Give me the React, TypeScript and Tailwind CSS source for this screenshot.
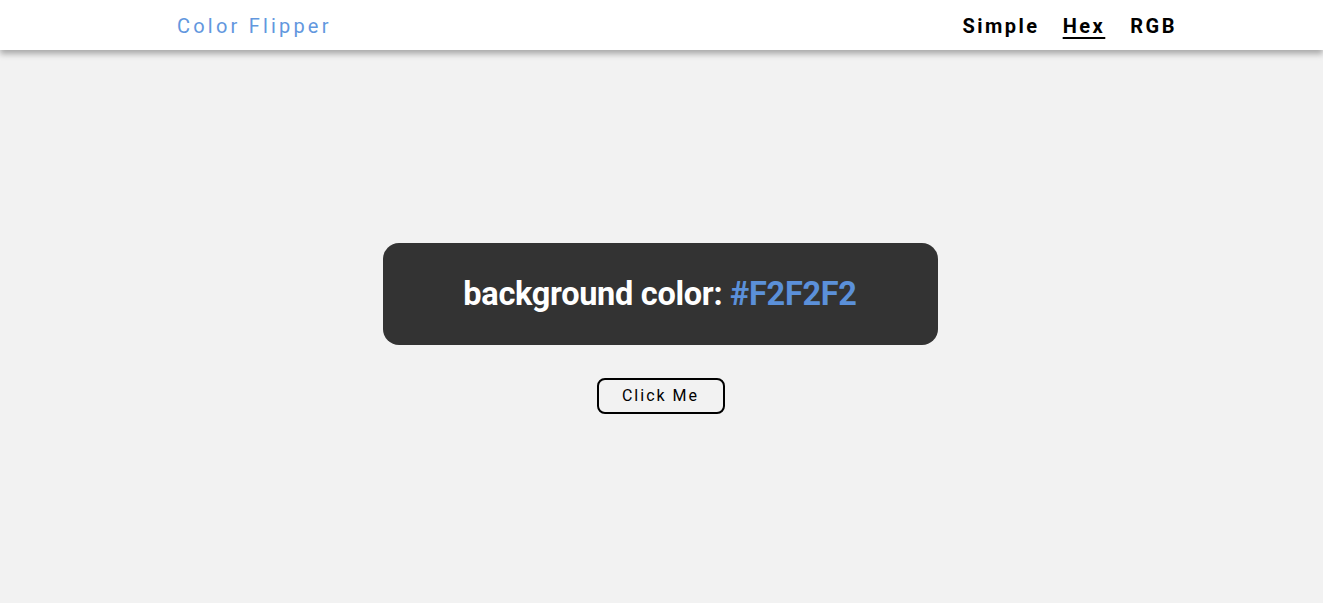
import React from "react";

export default function App() {
  return (
    <div className="min-h-screen bg-[#f2f2f2]" style={{ fontFamily: "Roboto, 'Liberation Sans', sans-serif" }}>
      <nav className="h-[50px] bg-white shadow-[0_4px_6px_rgba(0,0,0,0.3)] relative z-10">
        <div className="h-full flex items-center justify-between pl-[177px] pr-[146px] pt-[2px]">
          <span className="text-[20px] tracking-[3.2px] text-[#6297de] font-normal">Color Flipper</span>
          <ul className="flex items-center">
            <li className="text-[20px] font-bold tracking-[2.5px] text-black">Simple</li>
            <li className="ml-[23px] text-[20px] font-bold tracking-[2.5px] text-black underline underline-offset-[4px] decoration-2">Hex</li>
            <li className="ml-[25px] text-[20px] font-bold tracking-[2.5px] text-black">RGB</li>
          </ul>
        </div>
      </nav>
      <main className="h-[553px] flex flex-col items-center justify-center pt-[4px] pr-[2px]">
        <div className="w-[555px] h-[102px] rounded-[16px] bg-[#333333] flex items-center justify-center">
          <h2 className="text-[32.5px] font-bold text-white tracking-[-0.3px] pr-[1px]">
            background color: <span className="text-[#5b90d9]">#F2F2F2</span>
          </h2>
        </div>
        <button className="mt-[33px] w-[128px] h-[36px] border-2 border-black rounded-[8px] bg-transparent text-[16px] tracking-[2px] text-black">
          Click Me
        </button>
      </main>
    </div>
  );
}
